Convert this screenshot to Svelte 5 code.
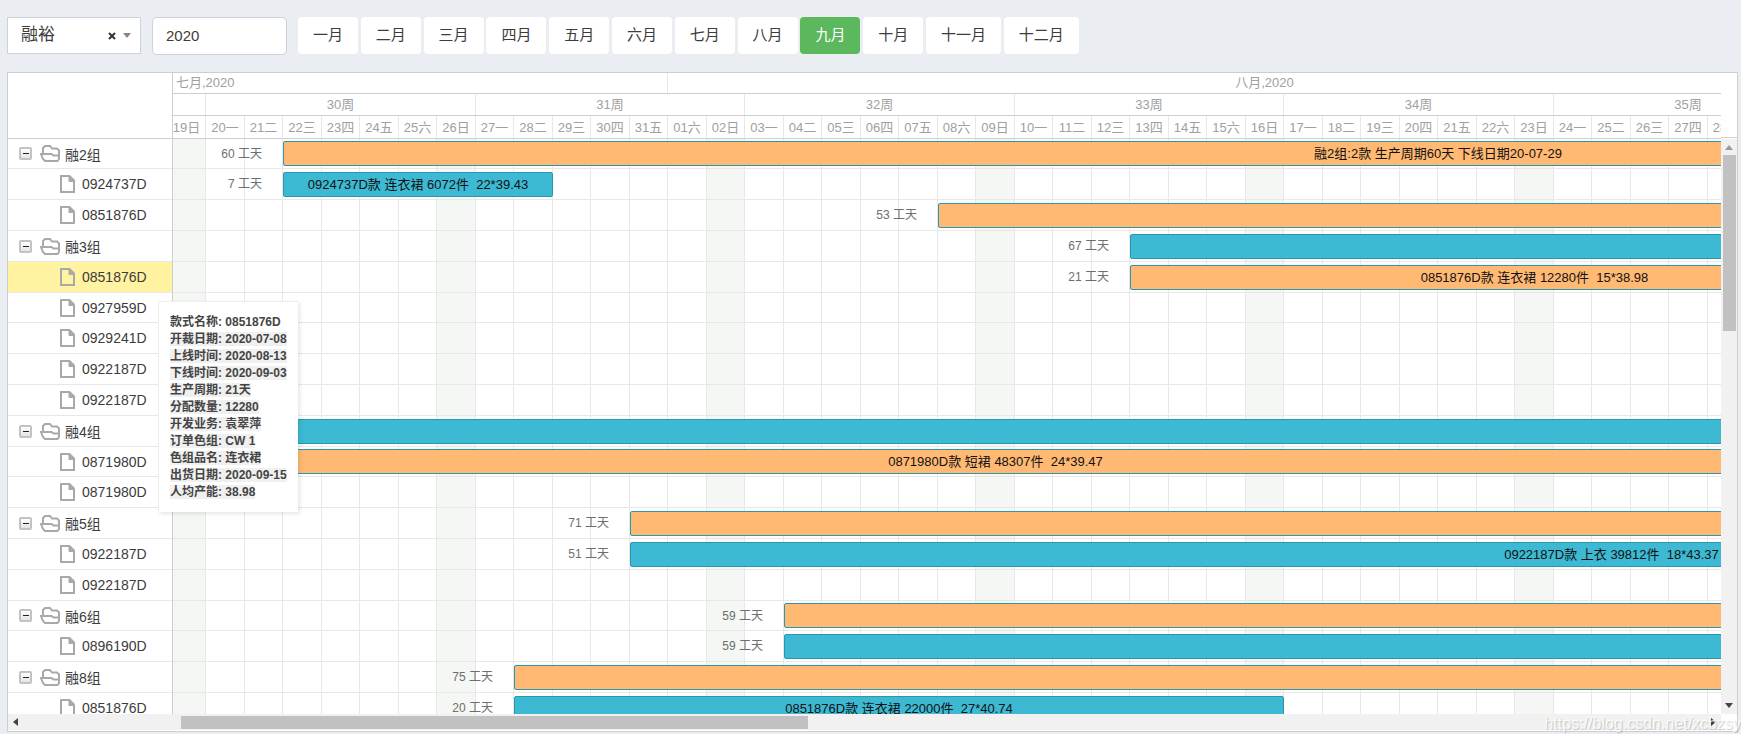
<script lang="ts">
  type Row = {
    name: string;
    group?: boolean;
    active?: boolean;
    // grid columns: the first one is July 19
    start?: number;
    days?: number;
    color?: "orange" | "blue";
    workdays?: number;
    text?: string;
  };

  const months = ["一月", "二月", "三月", "四月", "五月", "六月", "七月", "八月", "九月", "十月", "十一月", "十二月"];
  let activeMonth = $state("九月");
  let year = $state("2020");
  let team = $state("融裕");

  const weekdays = "日一二三四五六";
  const days = Array.from({ length: 41 }, (_, i) => {
    const d = new Date(2020, 6, 19 + i);
    return {
      label: String(d.getDate()).padStart(2, "0") + weekdays[d.getDay()],
      sunday: d.getDay() === 0
    };
  });
  const weeks = [30, 31, 32, 33, 34, 35];

  const rows: Row[] = [
    { name: "融2组", group: true, start: 4, days: 60, color: "orange", workdays: 60, text: "融2组:2款 生产周期60天 下线日期20-07-29" },
    { name: "0924737D", start: 4, days: 7, color: "blue", workdays: 7, text: "0924737D款 连衣裙 6072件  22*39.43" },
    { name: "0851876D", start: 21, days: 53, color: "orange", workdays: 53 },
    { name: "融3组", group: true, start: 26, days: 67, color: "blue", workdays: 67 },
    { name: "0851876D", active: true, start: 26, days: 21, color: "orange", workdays: 21, text: "0851876D款 连衣裙 12280件  15*38.98" },
    { name: "0927959D" },
    { name: "0929241D" },
    { name: "0922187D" },
    { name: "0922187D" },
    { name: "融4组", group: true, start: 1, days: 80, color: "blue" },
    { name: "0871980D", start: 1, days: 43, color: "orange", text: "0871980D款 短裙 48307件  24*39.47" },
    { name: "0871980D" },
    { name: "融5组", group: true, start: 13, days: 71, color: "orange", workdays: 71 },
    { name: "0922187D", start: 13, days: 51, color: "blue", workdays: 51, text: "0922187D款 上衣 39812件  18*43.37" },
    { name: "0922187D" },
    { name: "融6组", group: true, start: 17, days: 59, color: "orange", workdays: 59 },
    { name: "0896190D", start: 17, days: 59, color: "blue", workdays: 59 },
    { name: "融8组", group: true, start: 10, days: 75, color: "orange", workdays: 75 },
    { name: "0851876D", start: 10, days: 20, color: "blue", workdays: 20, text: "0851876D款 连衣裙 22000件  27*40.74" }
  ];

  const tooltip = [
    ["款式名称", "0851876D"],
    ["开裁日期", "2020-07-08"],
    ["上线时间", "2020-08-13"],
    ["下线时间", "2020-09-03"],
    ["生产周期", "21天"],
    ["分配数量", "12280"],
    ["开发业务", "袁翠萍"],
    ["订单色组", "CW 1"],
    ["色组品名", "连衣裙"],
    ["出货日期", "2020-09-15"],
    ["人均产能", "38.98"]
  ];
</script>

<div class="page">
  <div class="toolbar">
    <div class="team">
      <select aria-label="班组" bind:value={team}>
        <option>融裕</option>
      </select>
      <button class="clear" aria-label="清除">
        <svg width="8" height="8" viewBox="0 0 8 8" stroke="#333" stroke-width="2"><path d="M1 1l6 6M7 1l-6 6" /></svg>
      </button>
      <svg class="caret" width="8" height="5" viewBox="0 0 8 5"><path d="M0 0h8L4 5z" fill="#888" /></svg>
    </div>
    <input class="year" type="text" aria-label="年份" bind:value={year} />
    <div class="months">
      {#each months as m}
        <button class="month" class:on={m === activeMonth} onclick={() => (activeMonth = m)}>{m}</button>{" "}
      {/each}
    </div>
  </div>

  <div class="gantt">
    <div class="head">
      <div class="corner"></div>
      <div class="clip">
        <div class="days scale">
          <div class="cell july">七月,2020</div>
          <div class="cell august">八月,2020</div>
        </div>
        <div class="days scale">
          <div class="cell"></div>
          {#each weeks as w}
            <div class="cell week">{w}周</div>
          {/each}
        </div>
        <div class="days scale">
          {#each days as d}
            <div class="cell">{d.label}</div>
          {/each}
        </div>
      </div>
      <div class="head-end"></div>
    </div>

    <div class="body">
      <div class="tree">
        {#each rows as r}
          <div class="row name" class:child={!r.group} class:active={r.active}>
            {#if r.group}
              <button class="toggle" aria-label="折叠"></button>
              <svg class="folder" width="20" height="17" viewBox="0 0 20 17" fill="none" stroke="#a9a9a9" stroke-width="2">
                <path d="M3 9V3L5 1H10L12 3.500H17L19 5.500V14L17.500 16H5L3 14L1 9H11.500L13.500 10.500H19" />
              </svg>
            {:else}
              <svg class="file" width="15" height="18" viewBox="0 0 15 18" fill="none" stroke="#a9a9a9" stroke-width="2">
                <path d="M1 1h8.500L14 5.500V17H1z" />
                <path d="M9 1v5.500h5z" fill="#a9a9a9" stroke-width="1" />
              </svg>
            {/if}
            <span>{r.name}</span>
          </div>
        {/each}
      </div>

      <div class="clip">
        {#each rows as r}
          <div class="row days">
            {#each days as d, i}
              <div class="slot" class:sunday={d.sunday} style:grid-column={i + 1}></div>
            {/each}
            {#if r.start && r.days}
              {#if r.workdays}
                <div class="side" style:grid-column="1 / {r.start}">{r.workdays} 工天</div>
              {/if}
              <div class="bar {r.color}" style:grid-column="{r.start} / span {r.days}">{r.text ?? ""}</div>
            {/if}
          </div>
        {/each}
      </div>

      <div class="vscroll">
        <svg width="8" height="5" viewBox="0 0 8 5"><path d="M0 5h8L4 0z" fill="#999" /></svg>
        <div class="vthumb"></div>
        <svg class="down" width="8" height="5" viewBox="0 0 8 5"><path d="M0 0h8L4 5z" fill="#444" /></svg>
      </div>
    </div>

    <div class="foot">
      <div class="hscroll">
        <svg width="5" height="8" viewBox="0 0 5 8"><path d="M5 0v8L0 4z" fill="#444" /></svg>
        <div class="hthumb"></div>
        <svg class="right" width="5" height="8" viewBox="0 0 5 8"><path d="M0 0v8l5-4z" fill="#444" /></svg>
      </div>
    </div>

    <div class="tooltip" role="tooltip">
      {#each tooltip as [key, value], i}
        <div><b class:mark={i > 0}>{key}: {value}</b></div>
      {/each}
    </div>
  </div>

  <div class="watermark">https://blog.csdn.net/xcbzsy</div>
</div>

<style>
  :global(body) {
    background: #fff;
    overflow: hidden;
  }
  .page {
    position: relative;
    display: flex;
    flex-direction: column;
    box-sizing: border-box;
    height: calc(100vh - 7px);
    margin-right: 9px;
    padding: 17px 3px 2px 7px;
    background: #eaeef3;
    overflow: hidden;
    color: #3c3c3c;
    font-family: "Liberation Sans", Arial, "Noto Sans CJK SC", sans-serif;
  }
  button,
  select,
  input {
    font-family: inherit;
    color: inherit;
    padding: 0;
    margin: 0;
    border: 0;
  }
  button {
    cursor: pointer;
  }

  .toolbar {
    display: flex;
    align-items: flex-start;
    height: 38px;
    margin-bottom: 17px;
  }
  .team {
    display: flex;
    align-items: center;
    box-sizing: border-box;
    width: 134px;
    height: 37px;
    padding-right: 9px;
    border: 1px solid #ccd2dc;
    background: #fff;
  }
  select {
    flex: 1;
    height: 100%;
    padding: 0 0 2px 13px;
    appearance: none;
    background: transparent;
    font-size: 17px;
    outline: none;
  }
  .clear {
    display: flex;
    margin-right: 7px;
    background: transparent;
  }
  .year {
    box-sizing: border-box;
    width: 135px;
    height: 38px;
    margin: 0 11px;
    padding: 0 13px 2px;
    border: 1px solid #ccd2dc;
    border-radius: 5px;
    background: #fff;
    font-size: 15px;
    outline: none;
  }
  .months {
    font-size: 10px;
    white-space: nowrap;
  }
  .month {
    height: 37px;
    padding: 0 15px 4px;
    border-radius: 4px;
    background: #fff;
    font-size: 15px;
    vertical-align: top;
  }
  .month.on {
    background: #5cb85c;
    color: #fff;
  }

  .gantt {
    position: relative;
    flex: 1;
    min-height: 0;
    display: flex;
    flex-direction: column;
    border: 1px solid #cecece;
    background: #fff;
  }
  .head {
    display: flex;
    height: 66px;
  }
  .corner,
  .tree {
    flex: none;
    box-sizing: border-box;
    width: 165px;
    border-right: 1px solid #cecece;
  }
  .corner {
    border-bottom: 1px solid #cecece;
  }
  .clip {
    flex: 1;
    min-width: 0;
    overflow: hidden;
  }
  .head-end {
    flex: none;
    box-sizing: border-box;
    width: 16px;
    height: 65px;
    border-bottom: 1px solid #cecece;
  }
  .days {
    display: grid;
    grid-template-columns: repeat(60, 38px 39px);
    grid-template-rows: 100%;
    margin-left: -5px;
  }
  .scale {
    box-sizing: border-box;
    height: 22px;
    border-bottom: 1px solid #cecece;
    color: #a0a0a0;
    font-size: 13px;
    line-height: 22px;
  }
  .scale:first-child {
    height: 21px;
    line-height: 20px;
  }
  .scale:last-child {
    height: 23px;
    line-height: 24px;
  }
  .cell {
    box-sizing: border-box;
    border-right: 1px solid #e8e8e8;
    text-align: center;
    white-space: nowrap;
  }
  .july {
    grid-column: span 13;
    padding-left: 8px;
    text-align: left;
  }
  .august {
    grid-column: span 31;
  }
  .week {
    grid-column: span 7;
  }

  .body {
    flex: 1;
    min-height: 0;
    display: flex;
    overflow: hidden;
  }
  .row {
    box-sizing: border-box;
    height: 31px;
    border-bottom: 1px solid #e8e8e8;
  }
  .row:nth-child(5n + 1) {
    height: 30px;
  }
  .name {
    display: flex;
    align-items: center;
    padding-left: 11px;
    font-size: 14px;
    white-space: nowrap;
  }
  .name.child {
    padding-left: 52px;
  }
  .name.active {
    background: #fff3a1;
  }
  .toggle {
    display: flex;
    align-items: center;
    justify-content: center;
    box-sizing: border-box;
    width: 13px;
    height: 13px;
    border: 2px solid #c2c2c2;
    border-radius: 2px;
    background: linear-gradient(#fff, #e4e4e4);
  }
  .toggle::before {
    content: "";
    width: 6px;
    height: 1px;
    background: #222;
  }
  .folder {
    margin: 0 5px 0 8px;
  }
  .file {
    margin-right: 7px;
  }
  .row.days > * {
    grid-row: 1;
  }
  .slot {
    border-right: 1px solid #e8e8e8;
  }
  .sunday {
    background: #f4f7f4;
  }
  .side {
    justify-self: end;
    padding-right: 21px;
    color: #6e6e6e;
    font-size: 12px;
    line-height: 30px;
    white-space: nowrap;
  }
  .bar {
    box-sizing: border-box;
    height: 25px;
    margin-top: 3px;
    border: 1px solid #2898b0;
    border-radius: 2px;
    color: #111;
    font-size: 13px;
    line-height: 23px;
    text-align: center;
    white-space: pre;
  }
  .row:nth-child(5n + 1) .bar {
    margin-top: 2px;
  }
  .orange {
    background: #ffb973;
  }
  .blue {
    background: #3db9d3;
  }

  .vscroll {
    flex: none;
    display: flex;
    flex-direction: column;
    align-items: center;
    box-sizing: border-box;
    width: 16px;
    padding: 6px 0;
    background: #f1f1f1;
  }
  .vthumb {
    width: 13px;
    height: 176px;
    margin-top: 5px;
    background: #c1c1c1;
  }
  .down {
    margin-top: auto;
  }
  .foot {
    height: 17px;
    padding-right: 16px;
  }
  .hscroll {
    display: flex;
    align-items: center;
    height: 16px;
    padding: 0 5px;
    background: #f1f1f1;
  }
  .hthumb {
    width: 627px;
    height: 13px;
    margin-left: 163px;
    background: #c1c1c1;
  }
  .right {
    margin-left: auto;
  }

  .tooltip {
    position: absolute;
    left: 150px;
    top: 228px;
    box-sizing: border-box;
    width: 140px;
    padding: 12px 11px 11px;
    border-left: 1px solid #eee;
    border-top: 1px solid #eee;
    background: #fff;
    box-shadow: 2px 2px 4px rgba(0, 0, 0, 0.1);
    color: #444;
    font-size: 12px;
    line-height: 17px;
    white-space: nowrap;
  }
  .mark {
    background: #f0f0f0;
  }
  .watermark {
    position: absolute;
    right: 0;
    bottom: 1px;
    color: rgba(255, 255, 255, 0.8);
    font-size: 16px;
    line-height: 18px;
    text-shadow: 1px 1px 1px rgba(0, 0, 0, 0.2);
  }
</style>
